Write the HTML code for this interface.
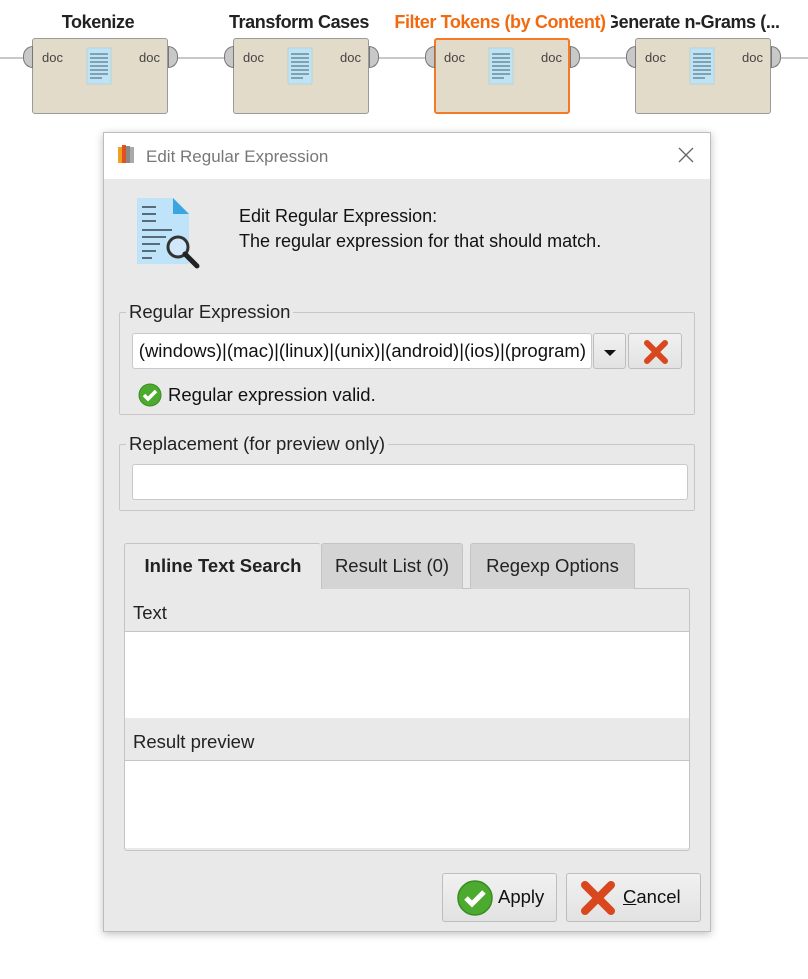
<!DOCTYPE html>
<html><head><meta charset="utf-8"><style>
*{margin:0;padding:0;box-sizing:border-box}
body{width:808px;height:979px;background:#fff;position:relative;overflow:hidden;font-family:"Liberation Sans",Arial,sans-serif;color:#222}
.a{position:absolute}
.node{position:absolute;top:38px;width:136px;height:76px;background:#e3dbc9;border:1px solid #9a9a9a;border-radius:3px}
.nt{position:absolute;top:12px;width:240px;text-align:center;font-weight:bold;font-size:18px;color:#222;letter-spacing:-0.4px;white-space:nowrap}
.port{position:absolute;top:46px;width:10px;height:22px;background:#c8c8c8;border:1px solid #777}
.pl{border-radius:10px 0 0 10px}
.pr{border-radius:0 10px 10px 0}
.doc{position:absolute;font-size:13px;color:#444;top:12px}
.fs{position:absolute;border:1px solid #c7c7c7;border-radius:2px}
.lg{position:absolute;background:#e8e9e8;padding:0 3px;font-size:18.5px;color:#222;top:-12px;left:6px;white-space:nowrap}
.tf{position:absolute;background:#fff;border:1px solid #c9c9c9;border-radius:3px}
.btn{position:absolute;border:1px solid #bdbdbd;border-radius:3px;background:linear-gradient(#f1f1f1,#e2e2e2)}
.tab{position:absolute;top:543px;height:46px;border:1px solid #c4c4c4;border-bottom:none;border-radius:3px 3px 0 0;font-size:18.5px;text-align:center;line-height:44px;white-space:nowrap}
</style></head><body>
<div class="a" style="left:0;top:57px;width:808px;height:2px;background:#c8c8c8"></div>

<!-- nodes -->
<div class="node" style="left:32px"></div>
<div class="node" style="left:233px"></div>
<div class="node" style="left:434px;border:2px solid #f57a26"></div>
<div class="node" style="left:635px"></div>
<div class="port pl" style="left:23px"></div><div class="port pr" style="left:168px"></div>
<div class="port pl" style="left:224px"></div><div class="port pr" style="left:369px"></div>
<div class="port pl" style="left:425px"></div><div class="port pr" style="left:570px"></div>
<div class="port pl" style="left:626px"></div><div class="port pr" style="left:771px"></div>
<div class="doc" style="left:42px;top:50px">doc</div><div class="doc" style="left:139px;top:50px">doc</div>
<div class="doc" style="left:243px;top:50px">doc</div><div class="doc" style="left:340px;top:50px">doc</div>
<div class="doc" style="left:444px;top:50px">doc</div><div class="doc" style="left:541px;top:50px">doc</div>
<div class="doc" style="left:645px;top:50px">doc</div><div class="doc" style="left:742px;top:50px">doc</div>
<svg class="a" style="left:0;top:0" width="808" height="120">
<g id="d"><rect x="87" y="48" width="24" height="36" fill="#bfe3f5" stroke="#9cc" stroke-width="0.5"/><path d="M90 54h18M90 58h18M90 62h18M90 66h18M90 70h18M90 74h18M90 78h12" stroke="#5a7a8a" stroke-width="1.2"/></g>
<use href="#d" x="201"/><use href="#d" x="402"/><use href="#d" x="603"/>
</svg>
<div class="a" style="left:0;top:0;width:808px;height:38px;background:#fff"></div>
<div class="nt" style="left:-22px">Tokenize</div>
<div class="nt" style="left:179px">Transform Cases</div>
<div class="nt" style="left:380px;color:#f26a0f">Filter Tokens (by Content)</div>
<div class="a" style="left:611px;top:12px;width:197px;height:26px;overflow:hidden"><div class="nt" style="left:-6px;top:0;width:auto;text-align:left">Generate n-Grams (...</div></div>

<!-- dialog -->
<div class="a" style="left:103px;top:132px;width:608px;height:800px;border:1px solid #bdbdbd;background:#e8e9e8;box-shadow:0 2px 8px rgba(0,0,0,.25)"></div>
<div class="a" style="left:104px;top:133px;width:606px;height:46px;background:#fff"></div>
<svg class="a" style="left:116px;top:143px" width="22" height="24"><rect x="2" y="4" width="4" height="16" fill="#f0a020"/><rect x="6" y="2" width="4" height="18" fill="#e05020"/><rect x="10" y="3" width="4" height="17" fill="#888"/><rect x="14" y="4" width="4" height="16" fill="#aaa"/></svg>
<div class="a" style="left:146px;top:147px;font-size:17px;color:#777">Edit Regular Expression</div>
<svg class="a" style="left:678px;top:147px" width="16" height="16"><path d="M1 1L15 15M15 1L1 15" stroke="#666" stroke-width="1.3"/></svg>

<svg class="a" style="left:134px;top:195px" width="70" height="76">
<path d="M3 3h36l16 16v50H3z" fill="#bfe3f8"/><path d="M39 3l16 16H39z" fill="#3aa5e0"/>
<path d="M8 12h14M8 19h14M8 26h14M8 35h30M8 42h24M8 49h18M8 56h14M8 63h10" stroke="#5a6b78" stroke-width="2"/>
<circle cx="44" cy="52" r="10" fill="#eef" fill-opacity=".4" stroke="#333" stroke-width="3"/><path d="M51 59l12 12" stroke="#222" stroke-width="5" stroke-linecap="round"/>
</svg>
<div class="a" style="left:239px;top:204px;font-size:18px;line-height:25px;color:#111">Edit Regular Expression:<br>The regular expression for that should match.</div>

<div class="fs" style="left:119px;top:312px;width:576px;height:103px"><div class="lg">Regular Expression</div></div>
<div class="tf" style="left:132px;top:333px;width:460px;height:36px;overflow:hidden"><div class="a" style="right:5px;top:0;font-size:18.5px;line-height:34px;white-space:nowrap;color:#111">(windows)|(mac)|(linux)|(unix)|(android)|(ios)|(program)</div></div>
<div class="btn" style="left:593px;top:333px;width:33px;height:36px"><div class="a" style="left:10px;top:16px;border:6px solid transparent;border-top:6px solid #111;border-bottom:none"></div></div>
<div class="btn" style="left:628px;top:333px;width:54px;height:36px"><svg class="a" style="left:14px;top:5px" width="26" height="26"><path d="M4 4L22 22M22 4L4 22" stroke="#d9471f" stroke-width="6" stroke-linecap="round"/></svg></div>
<svg class="a" style="left:137px;top:382px" width="26" height="26"><circle cx="13" cy="13" r="11" fill="#4caa2f" stroke="#3a8c22"/><path d="M7 13l4 4 8-8" stroke="#fff" stroke-width="3.5" fill="none"/></svg>
<div class="a" style="left:168px;top:384px;font-size:18.5px;color:#111">Regular expression valid.</div>

<div class="fs" style="left:119px;top:444px;width:576px;height:67px"><div class="lg">Replacement (for preview only)</div></div>
<div class="tf" style="left:132px;top:464px;width:556px;height:36px"></div>

<!-- tabs -->
<div class="a" style="left:124px;top:588px;width:566px;height:263px;border:1px solid #c4c4c4;border-radius:0 3px 3px 3px;background:#e8e9e8"></div>
<div class="tab" style="left:124px;width:197px;background:#e8e9e8;font-weight:bold;height:47px;z-index:2;border-right:none">Inline Text Search</div>
<div class="tab" style="left:321px;width:142px;background:#d4d4d4">Result List (0)</div>
<div class="tab" style="left:470px;width:165px;background:#d4d4d4">Regexp Options</div>
<div class="a" style="left:133px;top:602px;font-size:18.5px">Text</div>
<div class="a" style="left:125px;top:631px;width:564px;height:87px;background:#fff;border-top:1px solid #c4c4c4"></div>
<div class="a" style="left:133px;top:731px;font-size:18.5px">Result preview</div>
<div class="a" style="left:125px;top:760px;width:564px;height:88px;background:#fff;border-top:1px solid #c4c4c4"></div>

<!-- buttons -->
<div class="btn" style="left:442px;top:873px;width:115px;height:49px"></div>
<svg class="a" style="left:456px;top:879px" width="38" height="38"><circle cx="19" cy="19" r="17" fill="#4caa2f" stroke="#3a8c22" stroke-width="1.5"/><path d="M10 19l6 6 12-12" stroke="#fff" stroke-width="5" fill="none"/></svg>
<div class="a" style="left:498px;top:886px;font-size:18.5px;color:#111">Apply</div>
<div class="btn" style="left:566px;top:873px;width:135px;height:49px"></div>
<svg class="a" style="left:580px;top:880px" width="36" height="36"><path d="M5 5L31 31M31 5L5 31" stroke="#d9471f" stroke-width="8" stroke-linecap="round"/></svg>
<div class="a" style="left:623px;top:886px;font-size:18.5px;color:#111"><u>C</u>ancel</div>
</body></html>
